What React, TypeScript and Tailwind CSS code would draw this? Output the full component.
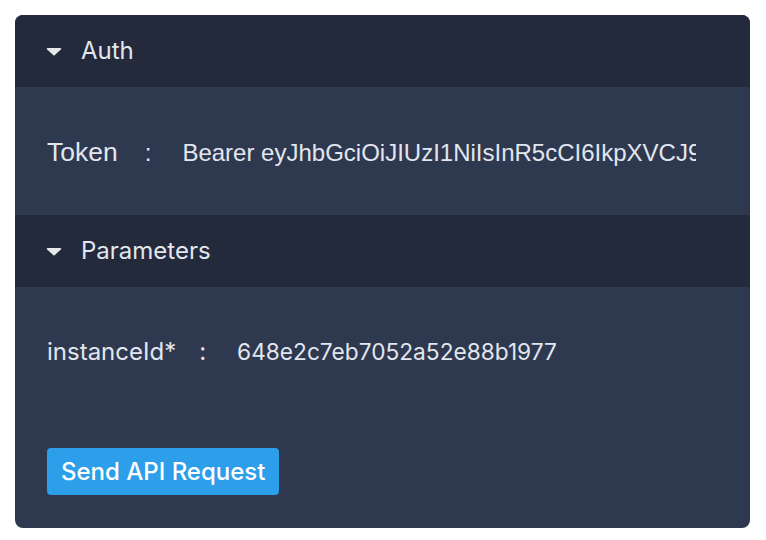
import React from 'react';

const inter = { fontFamily: 'Inter, "Noto Sans", sans-serif' };
const arial = { fontFamily: '"Liberation Sans", Arial, sans-serif' };

function Caret() {
  return (
    <svg width="16" height="9" viewBox="0 0 16 9" className="shrink-0">
      <path d="M1.5 1h13a.8.8 0 0 1 .6 1.3l-6.5 6a.9.9 0 0 1-1.2 0l-6.5-6A.8.8 0 0 1 1.5 1z" fill="#e5e7eb" />
    </svg>
  );
}

function SectionHeader({ title }: { title: string }) {
  return (
    <div className="flex h-[72px] items-center gap-[19px] bg-[#232a3b] pl-[31px]">
      <Caret />
      <span className="text-[24px] text-[#e2e6ee]" style={inter}>
        {title}
      </span>
    </div>
  );
}

export default function App() {
  return (
    <div className="min-h-screen bg-white p-[15px]">
      <div className="w-[735px] overflow-hidden rounded-lg bg-[#2e384e]">
        <SectionHeader title="Auth" />
        <div className="px-8 pt-[34px] pb-[30px]">
          <div className="flex h-16 items-center text-[24px] text-[#e2e6ee]" style={arial}>
            <span className="text-[26.5px]">Token</span>
            <span className="ml-[27px] mr-[31px]">:</span>
            <div className="w-[514px] overflow-hidden whitespace-nowrap">
              Bearer eyJhbGciOiJIUzI1NiIsInR5cCI6IkpXVCJ9.eyJzdWIiOiIxMjM0NTY3ODkwIn0
            </div>
          </div>
        </div>
        <SectionHeader title="Parameters" />
        <div className="px-8 pt-[33px] pb-8">
          <div className="flex h-16 items-center text-[24px] text-[#e2e6ee]" style={inter}>
            <span>instanceId*</span>
            <span className="ml-[23px] mr-[31px]">:</span>
            <span className="text-[22.7px]">648e2c7eb7052a52e88b1977</span>
          </div>
          <button
            className="mt-16 mb-px h-[47px] rounded bg-[#2d9ee9] px-[14px] text-[24px] font-medium text-white"
            style={inter}
          >
            Send API Request
          </button>
        </div>
      </div>
    </div>
  );
}
